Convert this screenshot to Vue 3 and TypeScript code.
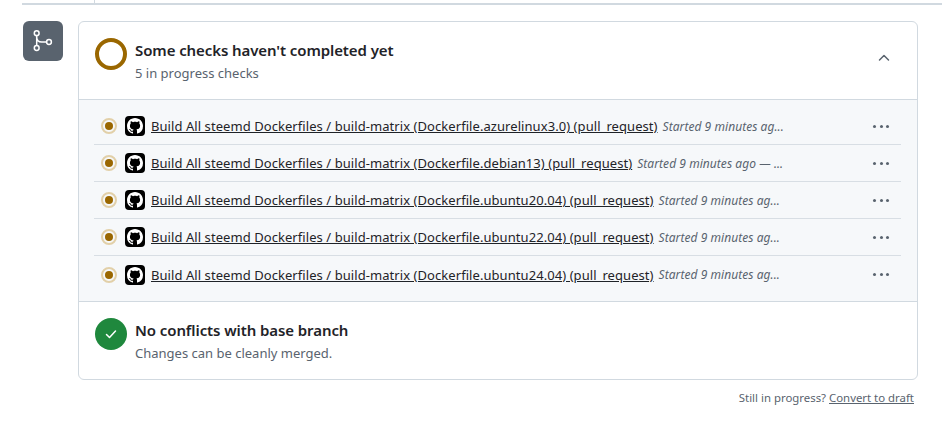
<template>
  <div class="page">
    <div class="top-rule"><span class="tick"></span></div>
    <div class="merge-box">
      <div class="branch-badge">
        <svg width="24" height="24" viewBox="0 0 24 24" fill="none" stroke="#fff" stroke-width="1.5">
          <circle cx="5.7" cy="4.2" r="2.4" />
          <circle cx="5.7" cy="19" r="2.4" />
          <circle cx="18" cy="13" r="2.4" />
          <path d="M5.7 6.6v10M5.7 8c0 3 2 5 5 5h4.9" />
        </svg>
      </div>
      <div class="main">
        <div class="card">
          <div class="head">
            <span class="ring"></span>
            <div class="head-text">
              <div class="title">Some checks haven't completed yet</div>
              <div class="sub">5 in progress checks</div>
            </div>
            <svg class="chevron" width="16" height="16" viewBox="0 0 16 16" fill="none" stroke="#59636e" stroke-width="1.5" stroke-linecap="round" stroke-linejoin="round">
              <path d="M3.5 10l4.5-4.5 4.5 4.5" />
            </svg>
          </div>
          <div class="checks">
            <div v-for="check in checks" :key="check.name" class="check-row">
              <span class="dot"></span>
              <span class="gh-tile">
                <svg width="16" height="16" viewBox="0 0 16 16" fill="#fff">
                  <path d="M8 0c4.42 0 8 3.58 8 8a8.013 8.013 0 0 1-5.45 7.59c-.4.08-.55-.17-.55-.38 0-.27.01-1.13.01-2.2 0-.75-.25-1.23-.54-1.48 1.78-.2 3.65-.88 3.65-3.95 0-.88-.31-1.59-.82-2.15.08-.2.36-1.02-.08-2.12 0 0-.67-.22-2.2.82-.64-.18-1.32-.27-2-.27-.68 0-1.36.09-2 .27-1.53-1.03-2.2-.82-2.2-.82-.44 1.1-.16 1.92-.08 2.12-.51.56-.82 1.28-.82 2.15 0 3.06 1.86 3.75 3.64 3.95-.23.2-.44.55-.51 1.07-.46.21-1.61.55-2.33-.66-.15-.24-.6-.83-1.23-.82-.67.01-.27.38.01.53.34.19.73.9.82 1.13.16.45.68 1.31 2.69.94 0 .67.01 1.3.01 1.49 0 .21-.15.45-.55.38A7.995 7.995 0 0 1 0 8c0-4.42 3.58-8 8-8Z" />
                </svg>
              </span>
              <a class="check-link">{{ check.name }}</a>
              <span class="check-note">{{ check.note }}</span>
              <span class="kebab"><i></i><i></i><i></i></span>
            </div>
          </div>
          <div class="conflicts">
            <span class="ok">
              <svg width="16" height="16" viewBox="0 0 16 16" fill="none" stroke="#fff" stroke-width="1.5" stroke-linecap="round" stroke-linejoin="round">
                <path d="M3.5 8.5l3 3 6-6.5" />
              </svg>
            </span>
            <div class="head-text">
              <div class="title">No conflicts with base branch</div>
              <div class="sub">Changes can be cleanly merged.</div>
            </div>
          </div>
        </div>
        <div class="footnote">Still in progress? <a>Convert to draft</a></div>
      </div>
    </div>
  </div>
</template>

<script setup lang="ts">
interface Check {
  name: string
  note: string
}

const prefix = 'Build All steemd Dockerfiles / build-matrix'

const checks: Check[] = [
  { name: `${prefix} (Dockerfile.azurelinux3.0) (pull_request)`, note: 'Started 9 minutes ag...' },
  { name: `${prefix} (Dockerfile.debian13) (pull_request)`, note: 'Started 9 minutes ago — ...' },
  { name: `${prefix} (Dockerfile.ubuntu20.04) (pull_request)`, note: 'Started 9 minutes ag...' },
  { name: `${prefix} (Dockerfile.ubuntu22.04) (pull_request)`, note: 'Started 9 minutes ag...' },
  { name: `${prefix} (Dockerfile.ubuntu24.04) (pull_request)`, note: 'Started 9 minutes ag...' },
]
</script>

<style>
html,
body {
  background: #fff;
}
</style>

<style scoped>
.page {
  width: 942px;
  height: 422px;
  overflow: hidden;
  font-family: 'Noto Sans', 'Open Sans', sans-serif;
  color: #1f2328;
}
.top-rule {
  height: 21px;
  margin-left: 22px;
  box-sizing: border-box;
  padding-left: 72px;
  background: linear-gradient(#d1d9e0, #d1d9e0) 0 3px / 100% 2px no-repeat;
}
.tick {
  display: block;
  width: 1px;
  height: 3px;
  background: #d1d9e0;
}
.merge-box {
  display: flex;
  padding-left: 23px;
  gap: 15px;
}
.branch-badge {
  width: 40px;
  height: 40px;
  flex: none;
  border-radius: 6px;
  background: #59636e;
  display: flex;
  align-items: center;
  justify-content: center;
}
.main {
  width: 840px;
}
.card {
  border: 1px solid #d1d9e0;
  border-radius: 6px;
  overflow: hidden;
  background: #fff;
}
.head {
  display: flex;
  align-items: flex-start;
  height: 77px;
  box-sizing: border-box;
  padding: 16px 25px 0 16px;
  gap: 8px;
}
.ring {
  width: 32px;
  height: 32px;
  flex: none;
  box-sizing: border-box;
  border: 4px solid #9a6700;
  border-radius: 50%;
}
.head-text {
  flex: 1;
  min-width: 0;
  padding-top: 1px;
}
.title {
  font-size: 15px;
  font-weight: 600;
  line-height: 22px;
  letter-spacing: -0.09px;
}
.sub {
  font-size: 13px;
  line-height: 20px;
  color: #59636e;
  margin-top: 2px;
}
.chevron {
  margin-top: 12px;
}
.checks {
  background: #f6f8fa;
  border-top: 1px solid #d1d9e0;
  border-bottom: 1px solid #d1d9e0;
  padding: 8px 16px 8px 15px;
}
.check-row {
  display: flex;
  align-items: center;
  height: 37px;
  box-sizing: border-box;
  border-bottom: 1px solid #d8dee4;
  padding-left: 7px;
}
.check-row:last-child {
  border-bottom: none;
}
.dot {
  width: 16px;
  height: 16px;
  flex: none;
  box-sizing: border-box;
  border-radius: 50%;
  border: 2px solid #e2d0a9;
  display: flex;
  align-items: center;
  justify-content: center;
  margin-right: 8px;
}
.dot::after {
  content: '';
  width: 8px;
  height: 8px;
  border-radius: 50%;
  background: #9a6700;
}
.gh-tile {
  width: 20px;
  height: 20px;
  flex: none;
  border-radius: 4px;
  background: #000;
  display: flex;
  align-items: center;
  justify-content: center;
  margin-right: 6px;
  overflow: hidden;
}
.check-link {
  font-size: 13px;
  letter-spacing: 0.065px;
  color: #1f2328;
  text-decoration: underline;
  white-space: nowrap;
}
.check-note {
  font-size: 12px;
  font-style: italic;
  letter-spacing: 0.05px;
  color: #59636e;
  margin-left: 5px;
  white-space: nowrap;
}
.kebab {
  margin-left: auto;
  margin-right: 12px;
  display: flex;
  gap: 3.5px;
}
.kebab i {
  width: 3px;
  height: 3px;
  border-radius: 50%;
  background: #59636e;
}
.conflicts {
  display: flex;
  align-items: flex-start;
  height: 77px;
  box-sizing: border-box;
  padding: 16px 16px 0;
  gap: 8px;
}
.ok {
  width: 32px;
  height: 32px;
  flex: none;
  border-radius: 50%;
  background: #1f883d;
  display: flex;
  align-items: center;
  justify-content: center;
}
.footnote {
  text-align: right;
  font-size: 11.4px;
  line-height: 18px;
  color: #59636e;
  margin-top: 9px;
  padding-right: 4px;
}
.footnote a {
  text-decoration: underline;
}
</style>
